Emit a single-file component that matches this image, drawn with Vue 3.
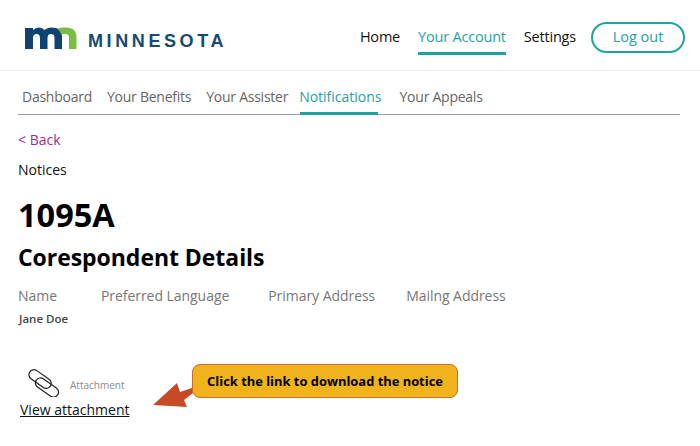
<template>
  <div class="page">
    <header class="topbar">
      <div class="brand">
        <svg class="brand-mark" width="52" height="22" viewBox="0 0 52 22">
          <path d="M0 22V1H8V3Q10.500 0.500 14 0.500Q17.500 0.500 19.500 3Q22 0.500 26 0.500Q37 0.500 37 10V22H29.500V11Q29.500 7 26 7Q22.500 7 22.500 11V22H15V11Q15 7 11.500 7Q8 7 8 11V22Z" fill="#0f4470" />
          <path d="M37 0.500H41Q51.500 0.500 51.500 11V22H44V11Q44 7 40.500 7H36Q35 4 32.500 1.500Z" fill="#78be43" />
        </svg>
        <span class="brand-name">MINNESOTA</span>
      </div>
      <nav class="main-nav">
        <a class="main-link">Home</a>
        <a class="main-link active">Your Account</a>
        <a class="main-link">Settings</a>
        <button class="logout" type="button">Log out</button>
      </nav>
    </header>

    <nav class="tabs">
      <a v-for="tab in tabs" :key="tab.label" class="tab" :class="{ active: tab.active }">{{ tab.label }}</a>
    </nav>

    <main class="content">
      <a class="back">&lt; Back</a>
      <div class="crumb">Notices</div>
      <h1 class="title">1095A</h1>
      <h2 class="subtitle">Corespondent Details</h2>

      <div class="details">
        <span v-for="col in columns" :key="col">{{ col }}</span>
      </div>
      <div class="person">Jane Doe</div>

      <div class="attachment">
        <svg class="clip" width="34" height="28" viewBox="0 0 34 28">
          <g fill="none" stroke="#222" stroke-width="1.200" transform="rotate(35 17 14)">
            <rect x="-1" y="8" width="25" height="10" rx="5" />
            <rect x="9" y="11" width="26" height="10" rx="5" />
          </g>
        </svg>
        <span class="attachment-label">Attachment</span>
      </div>
      <a class="view-link">View attachment</a>

      <svg class="arrow" width="41" height="25" viewBox="0 0 41 25">
        <path d="M0 22L24 0L27 9L39 5L40 10L31 17L34 24Z" fill="#c64a26" />
      </svg>
      <div class="callout">Click the link to download the notice</div>
    </main>
  </div>
</template>

<script setup>
const tabs = [
  { label: 'Dashboard' },
  { label: 'Your Benefits' },
  { label: 'Your Assister' },
  { label: 'Notifications', active: true },
  { label: 'Your Appeals' },
];

const columns = ['Name', 'Preferred Language', 'Primary Address', 'Mailng Address'];
</script>

<style>
html,
body {
  margin: 0;
  background: #fff;
}
</style>

<style scoped>
.page {
  width: 700px;
  height: 446px;
  overflow: hidden;
  font-family: "Open Sans", "Noto Sans", sans-serif;
  color: #111;
}

.topbar {
  display: flex;
  align-items: flex-start;
  justify-content: space-between;
  box-sizing: border-box;
  height: 71px;
  padding: 22px 15px 0 25px;
  border-bottom: 1px solid #ececec;
}

.brand {
  display: flex;
  align-items: flex-end;
  gap: 11px;
  padding-top: 5px;
}

.brand-name {
  font-family: "Liberation Sans", sans-serif;
  font-weight: 700;
  font-size: 18px;
  line-height: 15px;
  letter-spacing: 3.600px;
  color: #174a72;
}

.main-nav {
  display: flex;
  align-items: flex-start;
}

.main-link {
  margin-right: 18px;
  padding: 4px 0 5px;
  font-size: 14.500px;
  line-height: 21px;
  letter-spacing: -0.200px;
  border-bottom: 3px solid transparent;
}

.main-link.active {
  margin-right: 18px;
  color: #1ea3a3;
  border-bottom-color: #1ea3a3;
}

.main-link:nth-child(3) {
  margin-right: 15px;
}

.logout {
  width: 94px;
  height: 31px;
  padding: 0 0 2px;
  border: 2px solid #1ea3a3;
  border-radius: 16px;
  background: #fff;
  color: #1ea3a3;
  font-family: inherit;
  font-size: 14.500px;
}

.tabs {
  display: flex;
  box-sizing: border-box;
  width: 662px;
  height: 44px;
  margin-left: 18px;
  padding: 15px 0 0 4px;
  border-bottom: 1px solid #9a9a9a;
}

.tab {
  margin-right: 15px;
  font-size: 14px;
  line-height: 22px;
  letter-spacing: -0.250px;
  color: #666;
}

.tab:nth-child(3) {
  margin-right: 11px;
}

.tab.active {
  position: relative;
  height: 29px;
  margin-right: 18px;
  letter-spacing: 0;
  color: #1ea3a3;
}

.tab.active::after {
  content: "";
  position: absolute;
  left: 1px;
  bottom: 0;
  width: 78px;
  height: 3px;
  background: #1ea3a3;
}

.content {
  position: relative;
  padding: 14px 0 0 18px;
}

.back {
  display: block;
  font-size: 14px;
  line-height: 22px;
  color: #9a2d95;
}

.crumb {
  margin-top: 8px;
  font-size: 14px;
  line-height: 22px;
}

.title {
  margin: 12px 0 0;
  font-size: 32.500px;
  line-height: 44px;
  font-weight: 700;
  color: #000;
}

.subtitle {
  margin: 0;
  font-size: 23px;
  line-height: 40px;
  font-weight: 700;
  letter-spacing: -0.050px;
  color: #000;
}

.details {
  display: flex;
  gap: 31px;
  margin-top: 8px;
  font-size: 14px;
  line-height: 22px;
  letter-spacing: -0.050px;
  color: #777;
}

.details span:first-child {
  margin-right: 13px;
}

.details span:nth-child(2) {
  margin-right: 8px;
}

.person {
  margin: 4px 0 0 1px;
  font-size: 11.500px;
  line-height: 16px;
  font-weight: 600;
  color: #444;
}

.attachment {
  display: flex;
  align-items: center;
  gap: 9px;
  margin: 42px 0 0 9px;
}

.attachment-label {
  padding-top: 4px;
  font-size: 10px;
  color: #888;
}

.view-link {
  display: inline-block;
  margin: 3px 0 0 2px;
  font-size: 14px;
  line-height: 20px;
  color: #111;
  text-decoration: underline;
}

.arrow {
  position: absolute;
  left: 153px;
  top: 268px;
}

.callout {
  position: absolute;
  left: 192px;
  top: 249px;
  box-sizing: border-box;
  width: 266px;
  height: 34px;
  border: 1px solid #cf6a2a;
  border-radius: 8px;
  background: #f1b31c;
  font-size: 12.900px;
  line-height: 32px;
  font-weight: 700;
  text-align: center;
  color: #000;
}
</style>
